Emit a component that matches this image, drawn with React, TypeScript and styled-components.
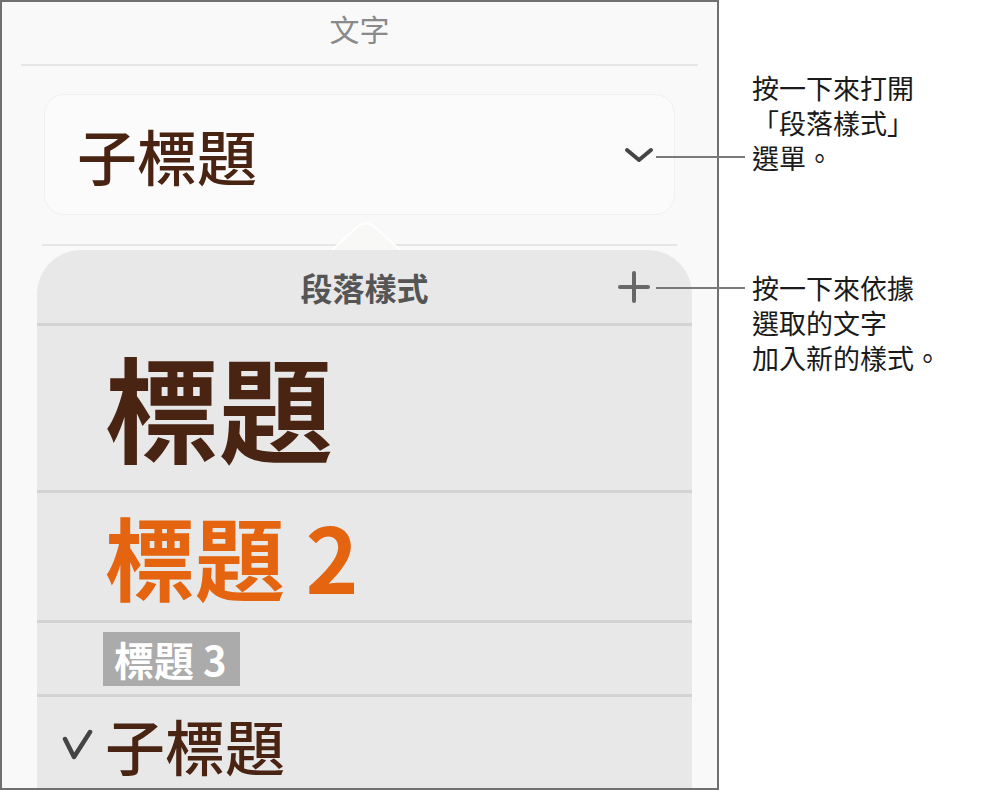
import React from 'react'
import styled, {createGlobalStyle} from 'styled-components'

const BROWN = '#4a2413'
const ORANGE = '#e4640f'

const GlobalStyle = createGlobalStyle`
  body {
    margin: 0;
    background: #ffffff;
    font-family: "Noto Sans CJK TC", "Noto Sans", sans-serif;
  }
`

const Page = styled.div`
  position: relative;
  width: 995px;
  height: 790px;
  display: flex;
  align-items: flex-start;
  overflow: hidden;
`

const Frame = styled.div`
  width: 719px;
  height: 790px;
  box-sizing: border-box;
  border: 2px solid #707070;
  background: #f9f9f9;
  display: flex;
  flex-direction: column;
  overflow: hidden;
`

const PanelTitle = styled.div`
  height: 62px;
  flex-shrink: 0;
  line-height: 52px;
  text-align: center;
  font-size: 30px;
  color: #8a8a8a;
`

const Rule = styled.div<{$inset: string; $top?: number}>`
  height: 2px;
  flex-shrink: 0;
  background: #e6e6e6;
  margin: ${(p) => p.$top || 0}px ${(p) => p.$inset} 0;
`

const StyleCard = styled.div`
  margin: 28px 42px 0;
  height: 121px;
  flex-shrink: 0;
  box-sizing: border-box;
  border-radius: 20px;
  background: #fbfbfb;
  border: 1px solid #f0f0f0;
  display: flex;
  align-items: center;
  justify-content: space-between;
  padding: 0 20px 0 32px;
`

const CurrentStyle = styled.div`
  font-size: 60px;
  line-height: 1;
  font-weight: 500;
  color: ${BROWN};
`

const Popover = styled.div`
  position: relative;
  flex: 1;
  min-height: 0;
  margin: 4px 25px 0 35px;
  background: #e8e8e8;
  border-radius: 44px 44px 0 0;
  display: flex;
  flex-direction: column;
`

const PopoverArrow = styled.svg`
  position: absolute;
  top: -28px;
  left: 295px;
`

const PopoverHeader = styled.div`
  height: 73px;
  flex-shrink: 0;
  display: grid;
  grid-template-columns: 1fr auto 1fr;
  align-items: center;
`

const PopoverTitle = styled.div`
  grid-column: 2;
  font-size: 32px;
  font-weight: 700;
  color: #555555;
`

const AddButton = styled.svg`
  grid-column: 3;
  justify-self: end;
  margin-right: 42px;
`

// content height only, the 3px separator sits on top of it
const StyleRow = styled.div<{$height: number}>`
  height: ${(p) => p.$height}px;
  flex-shrink: 0;
  border-top: 3px solid #d3d3d3;
  display: grid;
  grid-template-columns: 68px 1fr;
  align-items: center;
`

const Gutter = styled.div`
  display: flex;
  justify-content: flex-end;
  padding-right: 12px;
`

const Heading1 = styled.div`
  font-size: 114px;
  line-height: 1;
  font-weight: 700;
  color: ${BROWN};
  margin-top: -6px;
`

const Heading2 = styled.div`
  font-size: 90px;
  line-height: 1;
  font-weight: 700;
  color: ${ORANGE};
  margin-top: -4px;
`

const Heading3 = styled.div`
  justify-self: start;
  margin-left: -2px;
  height: 54px;
  line-height: 54px;
  padding: 0 13px 0 11px;
  background: #ababab;
  font-size: 40px;
  font-weight: 700;
  color: #ffffff;
`

const Subtitle = styled.div`
  font-size: 60px;
  line-height: 1;
  font-weight: 500;
  color: ${BROWN};
`

const Notes = styled.div`
  margin-left: 33px;
  padding-top: 70px;
  display: flex;
  flex-direction: column;
  gap: 95px;
`

const Note = styled.div`
  font-size: 27px;
  line-height: 35px;
  color: #1a1a1a;
`

const Leader = styled.div<{$top: number}>`
  position: absolute;
  left: 656px;
  top: ${(p) => p.$top}px;
  width: 89px;
  height: 2px;
  background: #7a7a7a;
`

const App = (): JSX.Element => {
  return (
    <Page>
      <GlobalStyle />
      <Frame>
        <PanelTitle>文字</PanelTitle>
        <Rule $inset='19px' />
        <StyleCard>
          <CurrentStyle>子標題</CurrentStyle>
          <svg width='30' height='16' viewBox='0 0 30 16'>
            <path d='M3 3 L15 13 L27 3' fill='none' stroke='#454545' strokeWidth='4' strokeLinecap='round' strokeLinejoin='round' />
          </svg>
        </StyleCard>
        <Rule $inset='40px' $top={29} />
        <Popover>
          <PopoverArrow width='68' height='28' viewBox='0 0 68 28'>
            <path d='M0 28 L24 6 Q34 -3 44 6 L68 28 Z' fill='#f8f8f7' />
            <path d='M0 28 L24 6 Q34 -3 44 6 L68 28' fill='none' stroke='#ffffff' strokeWidth='2' />
          </PopoverArrow>
          <PopoverHeader>
            <PopoverTitle>段落樣式</PopoverTitle>
            <AddButton width='32' height='32' viewBox='0 0 32 32'>
              <path d='M16 2 V30 M2 16 H30' stroke='#676767' strokeWidth='4' strokeLinecap='round' />
            </AddButton>
          </PopoverHeader>
          <StyleRow $height={164}>
            <span />
            <Heading1>標題</Heading1>
          </StyleRow>
          <StyleRow $height={127}>
            <span />
            <Heading2>標題 2</Heading2>
          </StyleRow>
          <StyleRow $height={71}>
            <span />
            <Heading3>標題 3</Heading3>
          </StyleRow>
          <StyleRow $height={95}>
            <Gutter>
              <svg width='32' height='32' viewBox='0 0 32 32'>
                <path d='M4 10 L13 28 L29 3' fill='none' stroke='#444444' strokeWidth='4.5' strokeLinecap='round' strokeLinejoin='round' />
              </svg>
            </Gutter>
            <Subtitle>子標題</Subtitle>
          </StyleRow>
        </Popover>
      </Frame>
      <Notes>
        <Note>按一下來打開<br />「段落樣式」<br />選單。</Note>
        <Note>按一下來依據<br />選取的文字<br />加入新的樣式。</Note>
      </Notes>
      <Leader $top={156} />
      <Leader $top={287} />
    </Page>
  )
}

export default App
